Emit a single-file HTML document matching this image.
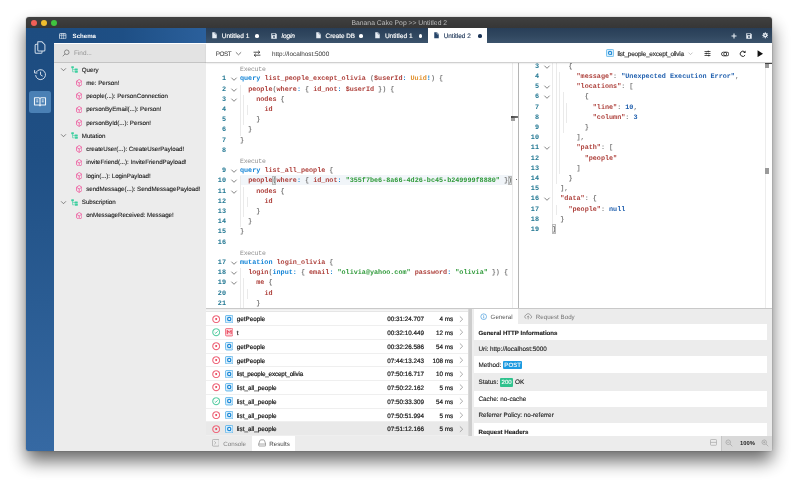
<!DOCTYPE html>
<html><head><meta charset="utf-8"><title>Banana Cake Pop</title>
<style>
html,body{margin:0;padding:0;background:#fff;}
body{width:800px;height:487px;position:relative;overflow:hidden;font-family:"Liberation Sans",sans-serif;font-size:6.4px;color:#222;text-rendering:geometricPrecision;}
#root{position:absolute;left:0;top:0;width:800px;height:487px;will-change:transform;opacity:.999}
#win{position:absolute;left:26.3px;top:17px;width:746px;height:433.7px;border-radius:3px 3px 2px 2px;box-shadow:0 10px 18px rgba(0,0,0,.60),0 0 1.2px rgba(0,0,0,.5);background:#fff;}
.abs,.ln,.cl,.fd,.lens,.g,.tr,.hr,.dr{position:absolute;}
#title{left:26.3px;top:17px;width:746px;height:11.3px;overflow:hidden;background:linear-gradient(#404040,#363636);border-radius:3px 3px 0 0;color:#bdbdbd;text-align:center;line-height:13.6px;font-size:6.8px;}
.tl{position:absolute;width:6.3px;height:6.3px;border-radius:50%;top:19.8px;}
#side{left:26.3px;top:28.2px;width:27.7px;height:422.5px;background:linear-gradient(#1d4c80 0%,#1f4f84 30%,#2a5c93 65%,#3669a3 100%);border-radius:0 0 0 2px;}
#schh{left:54px;top:28.2px;width:151.5px;height:15.3px;background:linear-gradient(to right,#1d4c80 0%,#1e4f85 45%,#2b609c 100%);color:#fff;font-weight:bold;font-size:6.1px;line-height:17.8px;}
#tabs{left:205.5px;top:28.2px;width:566.8px;height:15.3px;background:linear-gradient(#283e58,#30475f 50%,#3b536c);color:#fff;font-size:6.5px;line-height:17.6px;}
#tabs span{position:absolute;top:0.3px;white-space:nowrap;-webkit-text-stroke:0.15px #fff;}
.dot{position:absolute;top:5.9px;width:3.7px;height:3.7px;margin-left:-0.2px;border-radius:50%;}
#schp{left:54px;top:43.5px;width:151.5px;height:407.2px;background:#ececec;}
#find{left:54px;top:43.5px;width:151.5px;height:18px;background:#e3e3e3;border-bottom:0.6px solid #c4c4c4;}
#tool{left:205.5px;top:43.5px;width:566.8px;height:18px;background:#fff;border-bottom:0.6px solid #d0d0d0;box-shadow:0 0.8px 1.6px rgba(0,0,0,.13);z-index:3;line-height:21.2px;font-size:6.4px;color:#333;}
#tool span{position:absolute;top:0;white-space:nowrap;}
.ln{height:10.2px;line-height:10.2px;text-align:right;font-family:"Liberation Mono",monospace;font-size:6.8px;color:#237893;font-weight:bold;}
.cl{height:10.2px;line-height:10.2px;white-space:pre;font-family:"Liberation Mono",monospace;font-size:6.773px;font-weight:bold;color:#777;}
.fd{width:8px;height:10.2px;}
.fold{position:absolute;left:0;top:1.1px;width:8px;height:8px;}
.lens{height:10.2px;line-height:12.4px;font-family:"Liberation Mono",monospace;font-size:6.5px;letter-spacing:-0.25px;color:#8e8e8e;white-space:pre;}
.g{width:0.6px;}
.j{color:#1f5fae}.k{color:#1183d6}.n{color:#ad3f3a}.p{color:#808080}.s{color:#2f9a3a}.v{color:#ad3f3a}.a{color:#1183d6}.t{color:#e0902c}
.tr{left:0;width:205px;height:13.25px;line-height:14.9px;font-size:6.2px;letter-spacing:-0.02px;color:#222;-webkit-text-stroke:0.12px #222;}
.tr span{position:absolute;top:0;white-space:nowrap;}
.ti{width:7px;height:13.2px;}
.ic{position:absolute;left:0;top:3.1px;width:7px;height:7px;}
.hr{left:205.5px;width:262px;height:13.75px;line-height:16.4px;border-bottom:0.5px solid #efefef;box-sizing:border-box;font-size:6.3px;color:#111;background:#fff;-webkit-text-stroke:0.18px #111;}
.hr.sel{background:#e9e9e9;}
.hr span{position:absolute;top:0;white-space:nowrap;}
.hc{width:8.4px;height:13.75px;}
.hi{position:absolute;left:0;top:2.4px;width:8.4px;height:8.4px;}
.hn{left:31.2px;}
.htm{right:43.5px;}
.hms{right:14.3px;}
.dr{left:473.7px;width:293.6px;overflow:hidden;font-size:6.34px;color:#1a1a1a;-webkit-text-stroke:0.12px #1a1a1a;white-space:nowrap;text-indent:4.8px;box-sizing:border-box;}
.bp,.bs{-webkit-text-stroke:0.1px #fff;}
.dr b{font-size:6.12px;}
.bp{display:inline-block;vertical-align:middle;height:8.4px;line-height:10.3px;background:#1e9be0;overflow:hidden;color:#fff;padding:0 1.25px;border-radius:1px;font-size:6.1px;text-indent:0;position:relative;top:-0.1px}
.bs{display:inline-block;vertical-align:middle;height:8.6px;line-height:9.1px;background:#2fc28d;color:#fff;padding:0 1.55px;border-radius:1px;font-size:6.1px;text-indent:0;position:relative;top:-0.2px}
</style></head><body>
<div id="root"><div id="win"></div>
<div class="abs" id="title">Banana Cake Pop &gt;&gt; Untitled 2</div>
<div class="tl" style="left:30.5px;background:#f25f57"></div>
<div class="tl" style="left:40.7px;background:#f1be2e"></div>
<div class="tl" style="left:51px;background:#3fc43f"></div>

<div class="abs" id="side">
  <div class="abs" style="left:3px;top:62.70px;width:22px;height:22.4px;border-radius:2.5px;background:#4a80b5"></div>
  <svg class="abs" style="left:7.2px;top:12.30px" width="13.8" height="14.8" viewBox="0 0 26 28"><path d="M9 3.5 H17 L22.5 9 V19 A2 2 0 0 1 20.5 21 H11 A2 2 0 0 1 9 19 Z" fill="none" stroke="#d3deea" stroke-width="1.9" stroke-linejoin="round"/><path d="M9 8 H6 A2 2 0 0 0 4 10 V23 A2 2 0 0 0 6 25 H15 A2 2 0 0 0 17 23 V21" fill="none" stroke="#d3deea" stroke-width="1.9"/></svg>
  <svg class="abs" style="left:7.1px;top:39.10px" width="14.6" height="14.6" viewBox="0 0 28 28"><path d="M6.2 10 A9.5 9.5 0 1 1 5 15.5" fill="none" stroke="#d3deea" stroke-width="1.9"/><path d="M3 6 V11.5 H8.5" fill="none" stroke="#d3deea" stroke-width="1.9"/><path d="M14.5 9 V15 L18.5 17.5" fill="none" stroke="#d3deea" stroke-width="1.9"/></svg>
  <svg class="abs" style="left:7.1px;top:67.90px" width="14" height="11.6" viewBox="0 0 28 26" preserveAspectRatio="none"><path d="M3 4 H11.5 A2.5 2.5 0 0 1 14 6.5 A2.5 2.5 0 0 1 16.500 4 H25 V20 H16.500 A2.5 2.5 0 0 0 14 22.5 A2.5 2.5 0 0 0 11.5 20 H3 Z M14 6.500 V22" fill="none" stroke="#eef4fa" stroke-width="2.2" stroke-linejoin="round"/><path d="M6.500 9 H10.500 M6.500 13 H10.500 M17.500 9 H21.500 M17.500 13 H21.500" stroke="#eef4fa" stroke-width="2"/></svg>
</div>

<div class="abs" id="schh"><svg class="abs" style="left:5.4px;top:4.9px" width="7.4" height="6.4" viewBox="0 0 15 13"><rect x="1" y="1" width="13" height="11" rx="1.5" fill="none" stroke="#e6edf5" stroke-width="1.5"/><path d="M5.5 1 V12 M9.500 1 V12 M1 4.500 H14" stroke="#e6edf5" stroke-width="1.300"/></svg><span style="position:absolute;left:18.6px">Schema</span></div>
<div class="abs" id="tabs">
  <div class="abs" style="left:222.8px;top:0;width:58.6px;height:15.3px;background:#fff"></div>
  <svg class="abs" style="left:6.6px;top:4.1px" width="5" height="6.6" viewBox="0 0 10 13"><path d="M0.500 0.500 H6 L9.500 4 V12.500 H0.500 Z" fill="#e6ecf3"/><path d="M6 0.500 V4 H9.500" fill="none" stroke="#30475f" stroke-width="1"/></svg>
  <span style="left:16.2px;font-size:6.55px">Untitled 1</span><i class="dot" style="left:49.9px;background:#fff"></i>
  <svg class="abs" style="left:65.6px;top:4.5px" width="6" height="6" viewBox="0 0 12 12"><path d="M0.500 0.500 H9.500 L11.5 2.500 V11.5 H0.500 Z" fill="#e6ecf3"/><rect x="2.500" y="1.500" width="6" height="3" fill="#30475f"/><circle cx="6" cy="8" r="1.800" fill="#30475f"/></svg>
  <span style="left:76.1px;font-style:italic;font-size:6.6px;letter-spacing:-0.15px">login</span>
  <svg class="abs" style="left:110.6px;top:4.1px" width="5" height="6.6" viewBox="0 0 10 13"><path d="M0.500 0.500 H6 L9.500 4 V12.500 H0.500 Z" fill="#e6ecf3"/><path d="M6 0.500 V4 H9.500" fill="none" stroke="#30475f" stroke-width="1"/></svg>
  <span style="left:120.1px;font-size:6.3px">Create DB</span><i class="dot" style="left:154.1px;background:#fff"></i>
  <svg class="abs" style="left:169.6px;top:4.1px" width="5" height="6.6" viewBox="0 0 10 13"><path d="M0.500 0.500 H6 L9.500 4 V12.500 H0.500 Z" fill="#e6ecf3"/><path d="M6 0.500 V4 H9.500" fill="none" stroke="#30475f" stroke-width="1"/></svg>
  <span style="left:179.4px;font-size:6.55px">Untitled 1</span><i class="dot" style="left:213.3px;background:#fff"></i>
  <svg class="abs" style="left:228.4px;top:4.1px" width="5" height="6.6" viewBox="0 0 10 13"><path d="M0.500 0.500 H6 L9.500 4 V12.500 H0.500 Z" fill="#27466a"/><path d="M6 0.500 V4 H9.500" fill="none" stroke="#fff" stroke-width="1"/></svg>
  <span style="left:238.2px;color:#1d3557;font-size:6.4px;-webkit-text-stroke:0.15px #1d3557">Untitled 2</span><i class="dot" style="left:272.5px;background:#1d3557"></i>
  <svg class="abs" style="left:525.300px;top:4.6px" width="6" height="6" viewBox="0 0 12 12"><path d="M6 1 V11 M1 6 H11" stroke="#e8eef5" stroke-width="2.2"/></svg>
  <svg class="abs" style="left:540.9px;top:4.6px" width="6" height="6" viewBox="0 0 12 12"><path d="M0.500 0.500 H9.500 L11.5 2.500 V11.5 H0.500 Z" fill="#e8eef5"/><rect x="2.500" y="1.500" width="6" height="3" fill="#30475f"/><circle cx="6" cy="8" r="1.800" fill="#30475f"/></svg>
  <svg class="abs" style="left:556px;top:4.300px" width="6.600" height="6.600" viewBox="0 0 14 14"><circle cx="7" cy="7" r="3.400" fill="none" stroke="#e8eef5" stroke-width="2.600"/><path d="M7 0.500 V13.500 M0.500 7 H13.500 M2.400 2.400 L11.6 11.6 M11.6 2.400 L2.400 11.6" stroke="#e8eef5" stroke-width="2"/><circle cx="7" cy="7" r="1.700" fill="#30475f"/></svg>
</div>

<div class="abs" id="schp"></div>
<div class="abs" id="find"><svg class="abs" style="left:7.6px;top:5.4px" width="8" height="8" viewBox="0 0 16 16"><circle cx="9.500" cy="6.500" r="4.600" fill="none" stroke="#666" stroke-width="1.400"/><path d="M6.200 9.800 L1.500 14.500" stroke="#666" stroke-width="1.400"/></svg><span style="position:absolute;left:20px;top:0;line-height:20.4px;color:#949494;font-size:6.4px">Find...</span></div>
<div class="tr" style="top:63.12px;line-height:15.1px"><span class="ti" style="left:60px"><svg class="ic" viewBox="0 0 16 16"><path d="M2.500 5.300 L8 10.800 L13.500 5.300" fill="none" stroke="#555" stroke-width="1.600"/></svg></span><span class="ti" style="left:71.2px"><svg class="ic" viewBox="0 0 14 14"><path d="M3 4 V11.600 H8.500 M3 7.200 H7.500" fill="none" stroke="#3ccf9f" stroke-width="1.2"/><rect x="0.500" y="0.500" width="5.200" height="4.200" rx="1" fill="#3ccf9f"/><rect x="7" y="5" width="6.500" height="4.200" rx="1" fill="#3ccf9f"/><rect x="8" y="9.700" width="5.500" height="3.900" rx="1" fill="#3ccf9f"/></svg></span><span class="tt" style="left:81.8px">Query</span></div>
<div class="tr" style="top:76.38px;line-height:15.1px"><span class="ti" style="left:75.9px"><svg class="ic" style="width:6.4px;height:7.9px;top:2.65px" viewBox="0 0 12 14" preserveAspectRatio="none"><path d="M6 0.800 L11 3.900 V10.100 L6 13.200 L1 10.100 V3.900 Z M1.300 4.100 L6 7 L10.700 4.100 M6 7 V13" fill="none" stroke="#ef5a9f" stroke-width="1.500" stroke-linejoin="round"/></svg></span><span class="tt" style="left:86.2px">me: Person!</span></div>
<div class="tr" style="top:89.62px"><span class="ti" style="left:75.9px"><svg class="ic" style="width:6.4px;height:7.9px;top:2.65px" viewBox="0 0 12 14" preserveAspectRatio="none"><path d="M6 0.800 L11 3.900 V10.100 L6 13.200 L1 10.100 V3.900 Z M1.300 4.100 L6 7 L10.700 4.100 M6 7 V13" fill="none" stroke="#ef5a9f" stroke-width="1.500" stroke-linejoin="round"/></svg></span><span class="tt" style="left:86.2px">people(...): PersonConnection</span></div>
<div class="tr" style="top:102.88px"><span class="ti" style="left:75.9px"><svg class="ic" style="width:6.4px;height:7.9px;top:2.65px" viewBox="0 0 12 14" preserveAspectRatio="none"><path d="M6 0.800 L11 3.900 V10.100 L6 13.200 L1 10.100 V3.900 Z M1.300 4.100 L6 7 L10.700 4.100 M6 7 V13" fill="none" stroke="#ef5a9f" stroke-width="1.500" stroke-linejoin="round"/></svg></span><span class="tt" style="left:86.2px">personByEmail(...): Person!</span></div>
<div class="tr" style="top:116.12px;line-height:15.1px"><span class="ti" style="left:75.9px"><svg class="ic" style="width:6.4px;height:7.9px;top:2.65px" viewBox="0 0 12 14" preserveAspectRatio="none"><path d="M6 0.800 L11 3.900 V10.100 L6 13.200 L1 10.100 V3.900 Z M1.300 4.100 L6 7 L10.700 4.100 M6 7 V13" fill="none" stroke="#ef5a9f" stroke-width="1.500" stroke-linejoin="round"/></svg></span><span class="tt" style="left:86.2px">personById(...): Person!</span></div>
<div class="tr" style="top:129.38px;line-height:15.1px"><span class="ti" style="left:60px"><svg class="ic" viewBox="0 0 16 16"><path d="M2.500 5.300 L8 10.800 L13.500 5.300" fill="none" stroke="#555" stroke-width="1.600"/></svg></span><span class="ti" style="left:71.2px"><svg class="ic" viewBox="0 0 14 14"><path d="M3 4 V11.600 H8.500 M3 7.200 H7.500" fill="none" stroke="#3ccf9f" stroke-width="1.2"/><rect x="0.500" y="0.500" width="5.200" height="4.200" rx="1" fill="#3ccf9f"/><rect x="7" y="5" width="6.500" height="4.200" rx="1" fill="#3ccf9f"/><rect x="8" y="9.700" width="5.500" height="3.900" rx="1" fill="#3ccf9f"/></svg></span><span class="tt" style="left:81.8px">Mutation</span></div>
<div class="tr" style="top:142.62px"><span class="ti" style="left:75.9px"><svg class="ic" style="width:6.4px;height:7.9px;top:2.65px" viewBox="0 0 12 14" preserveAspectRatio="none"><path d="M6 0.800 L11 3.900 V10.100 L6 13.200 L1 10.100 V3.900 Z M1.300 4.100 L6 7 L10.700 4.100 M6 7 V13" fill="none" stroke="#ef5a9f" stroke-width="1.500" stroke-linejoin="round"/></svg></span><span class="tt" style="left:86.2px">createUser(...): CreateUserPayload!</span></div>
<div class="tr" style="top:155.88px"><span class="ti" style="left:75.9px"><svg class="ic" style="width:6.4px;height:7.9px;top:2.65px" viewBox="0 0 12 14" preserveAspectRatio="none"><path d="M6 0.800 L11 3.900 V10.100 L6 13.200 L1 10.100 V3.900 Z M1.300 4.100 L6 7 L10.700 4.100 M6 7 V13" fill="none" stroke="#ef5a9f" stroke-width="1.500" stroke-linejoin="round"/></svg></span><span class="tt" style="left:86.2px">inviteFriend(...): InviteFriendPayload!</span></div>
<div class="tr" style="top:169.12px;line-height:15.1px"><span class="ti" style="left:75.9px"><svg class="ic" style="width:6.4px;height:7.9px;top:2.65px" viewBox="0 0 12 14" preserveAspectRatio="none"><path d="M6 0.800 L11 3.900 V10.100 L6 13.200 L1 10.100 V3.900 Z M1.300 4.100 L6 7 L10.700 4.100 M6 7 V13" fill="none" stroke="#ef5a9f" stroke-width="1.500" stroke-linejoin="round"/></svg></span><span class="tt" style="left:86.2px">login(...): LoginPayload!</span></div>
<div class="tr" style="top:182.38px;line-height:15.1px"><span class="ti" style="left:75.9px"><svg class="ic" style="width:6.4px;height:7.9px;top:2.65px" viewBox="0 0 12 14" preserveAspectRatio="none"><path d="M6 0.800 L11 3.900 V10.100 L6 13.200 L1 10.100 V3.900 Z M1.300 4.100 L6 7 L10.700 4.100 M6 7 V13" fill="none" stroke="#ef5a9f" stroke-width="1.500" stroke-linejoin="round"/></svg></span><span class="tt" style="left:86.2px">sendMessage(...): SendMessagePayload!</span></div>
<div class="tr" style="top:195.62px"><span class="ti" style="left:60px"><svg class="ic" viewBox="0 0 16 16"><path d="M2.500 5.300 L8 10.800 L13.500 5.300" fill="none" stroke="#555" stroke-width="1.600"/></svg></span><span class="ti" style="left:71.2px"><svg class="ic" viewBox="0 0 14 14"><path d="M3 4 V11.600 H8.500 M3 7.200 H7.500" fill="none" stroke="#3ccf9f" stroke-width="1.2"/><rect x="0.500" y="0.500" width="5.200" height="4.200" rx="1" fill="#3ccf9f"/><rect x="7" y="5" width="6.500" height="4.200" rx="1" fill="#3ccf9f"/><rect x="8" y="9.700" width="5.500" height="3.900" rx="1" fill="#3ccf9f"/></svg></span><span class="tt" style="left:81.8px">Subscription</span></div>
<div class="tr" style="top:208.88px"><span class="ti" style="left:75.9px"><svg class="ic" style="width:6.4px;height:7.9px;top:2.65px" viewBox="0 0 12 14" preserveAspectRatio="none"><path d="M6 0.800 L11 3.900 V10.100 L6 13.200 L1 10.100 V3.900 Z M1.300 4.100 L6 7 L10.700 4.100 M6 7 V13" fill="none" stroke="#ef5a9f" stroke-width="1.500" stroke-linejoin="round"/></svg></span><span class="tt" style="left:86.2px">onMessageReceived: Message!</span></div>

<div class="abs" id="tool">
  <span style="left:10.3px;letter-spacing:-0.5px">POST</span>
  <svg class="abs" style="left:29.800px;top:6.800px" width="7" height="7" viewBox="0 0 16 16"><path d="M2 5.200 L8 11 L14 5.200" fill="none" stroke="#444" stroke-width="1.600"/></svg>
  <svg class="abs" style="left:47.600px;top:6.300px" width="8" height="7.400" viewBox="0 0 16 15"><path d="M1 4.500 H13.500 M10.500 1.500 L13.800 4.500 L10.500 7.500" fill="none" stroke="#222" stroke-width="1.600"/><path d="M15 10.500 H2.500 M5.500 7.500 L2.200 10.500 L5.500 13.500" fill="none" stroke="#222" stroke-width="1.600"/></svg>
  <span style="left:66.5px">http://localhost:5000</span>
  <svg class="abs" style="left:400.500px;top:5.900px" width="8.100" height="8.100" viewBox="0 0 16 16"><rect x="0.800" y="0.800" width="14.400" height="14.400" rx="2.600" fill="#d9eefb" stroke="#4eaee8" stroke-width="1.600"/><circle cx="8" cy="7.800" r="3.100" fill="#fff" stroke="#1f8bd8" stroke-width="2.300"/><path d="M9.800 9.800 L11.600 11.900" stroke="#2387d3" stroke-width="1.600"/></svg>
  <span style="left:411.900px;font-size:6.45px;letter-spacing:-0.2px;color:#2a2a2a;-webkit-text-stroke:0.15px #2a2a2a">list_people_except_olivia</span>
  <svg class="abs" style="left:481.500px;top:6.400px" width="7" height="7" viewBox="0 0 16 16"><path d="M3.500 6 L8 10.500 L12.500 6" fill="none" stroke="#999" stroke-width="1.300"/></svg>
  <svg class="abs" style="left:498.400px;top:6.500px" width="7" height="7" viewBox="0 0 14 14"><path d="M1 3 H13 M1 7 H13 M1 11 H13" stroke="#222" stroke-width="1.500"/><path d="M8.500 1.300 V4.700 M4.500 5.300 V8.700 M9.500 9.300 V12.700" stroke="#222" stroke-width="1.800"/></svg>
  <svg class="abs" style="left:515.500px;top:7.5px" width="8.400" height="6" viewBox="0 0 17 12"><rect x="1" y="2.300" width="10.500" height="7.400" rx="3.700" fill="none" stroke="#222" stroke-width="1.600"/><rect x="5.500" y="2.300" width="10.500" height="7.400" rx="3.700" fill="none" stroke="#222" stroke-width="1.600"/></svg>
  <svg class="abs" style="left:533.800px;top:6.200px" width="7.600" height="7.600" viewBox="0 0 16 16"><path d="M12.800 10.800 A5.500 5.500 0 1 1 12.300 4.500" fill="none" stroke="#222" stroke-width="2"/><path d="M13.800 1.200 V6.200 H8.800 Z" fill="#222"/></svg>
  <svg class="abs" style="left:551.300px;top:6.300px" width="6.400" height="7.400" viewBox="0 0 12 14"><path d="M1 0.500 L11.500 7 L1 13.500 Z" fill="#111"/></svg>
</div>

<!-- editor -->
<div class="abs" style="left:205.5px;top:62.1px;width:312px;height:246px;background:#fff;overflow:hidden"></div>
<div class="abs" style="left:0;top:0;width:518.2px;height:308px;overflow:hidden;pointer-events:none">
<div class="abs" style="left:239.5px;top:175.2px;width:273px;height:10.2px;background:#f1f5f9"></div>
<div class="ln" style="top:74.30px;left:205.5px;width:20.5px">1</div>
<div class="fd" style="top:74.30px;left:230px"><svg class="fold" viewBox="0 0 8 8"><path d="M1.4 2.7 L4 5.3 L6.6 2.7" fill="none" stroke="#5a5a5a" stroke-width="0.75"/></svg></div>
<div class="cl" style="top:74.30px;left:240px"><span class="k">query</span> <span class="n">list_people_except_olivia</span><span class="p"> (</span><span class="v">$userId</span><span class="a">:</span> <span class="t">Uuid</span><span class="a">!</span><span class="p">) {</span></div>
<div class="ln" style="top:84.50px;left:205.5px;width:20.5px">2</div>
<div class="fd" style="top:84.50px;left:230px"><svg class="fold" viewBox="0 0 8 8"><path d="M1.4 2.7 L4 5.3 L6.6 2.7" fill="none" stroke="#5a5a5a" stroke-width="0.75"/></svg></div>
<div class="cl" style="top:84.50px;left:240px">  <span class="n">people</span><span class="p">(</span><span class="n">where</span><span class="a">:</span><span class="p"> { </span><span class="n">id_not</span><span class="a">:</span> <span class="v">$userId</span><span class="p"> }) {</span></div>
<div class="ln" style="top:94.70px;left:205.5px;width:20.5px">3</div>
<div class="fd" style="top:94.70px;left:230px"><svg class="fold" viewBox="0 0 8 8"><path d="M1.4 2.7 L4 5.3 L6.6 2.7" fill="none" stroke="#5a5a5a" stroke-width="0.75"/></svg></div>
<div class="cl" style="top:94.70px;left:240px">    <span class="n">nodes</span><span class="p"> {</span></div>
<div class="ln" style="top:104.90px;left:205.5px;width:20.5px">4</div>
<div class="cl" style="top:104.90px;left:240px">      <span class="n">id</span></div>
<div class="ln" style="top:115.10px;left:205.5px;width:20.5px">5</div>
<div class="cl" style="top:115.10px;left:240px"><span class="p">    }</span></div>
<div class="ln" style="top:125.30px;left:205.5px;width:20.5px">6</div>
<div class="cl" style="top:125.30px;left:240px"><span class="p">  }</span></div>
<div class="ln" style="top:135.50px;left:205.5px;width:20.5px">7</div>
<div class="cl" style="top:135.50px;left:240px"><span class="p">}</span></div>
<div class="ln" style="top:145.70px;left:205.5px;width:20.5px">8</div>
<div class="ln" style="top:166.10px;left:205.5px;width:20.5px">9</div>
<div class="fd" style="top:166.10px;left:230px"><svg class="fold" viewBox="0 0 8 8"><path d="M1.4 2.7 L4 5.3 L6.6 2.7" fill="none" stroke="#5a5a5a" stroke-width="0.75"/></svg></div>
<div class="cl" style="top:166.10px;left:240px"><span class="k">query</span> <span class="n">list_all_people</span><span class="p"> {</span></div>
<div class="ln" style="top:176.30px;left:205.5px;width:20.5px">10</div>
<div class="fd" style="top:176.30px;left:230px"><svg class="fold" viewBox="0 0 8 8"><path d="M1.4 2.7 L4 5.3 L6.6 2.7" fill="none" stroke="#5a5a5a" stroke-width="0.75"/></svg></div>
<div class="cl" style="top:176.30px;left:240px">  <span class="n">people</span><span class="p">(</span><span class="n">where</span><span class="a">:</span><span class="p"> { </span><span class="n">id_not</span><span class="a">:</span> <span class="s">"355f7be6-8a66-4d26-bc45-b249999f8880"</span><span class="p"> })</span></div>
<div class="ln" style="top:186.50px;left:205.5px;width:20.5px">11</div>
<div class="fd" style="top:186.50px;left:230px"><svg class="fold" viewBox="0 0 8 8"><path d="M1.4 2.7 L4 5.3 L6.6 2.7" fill="none" stroke="#5a5a5a" stroke-width="0.75"/></svg></div>
<div class="cl" style="top:186.50px;left:240px">    <span class="n">nodes</span><span class="p"> {</span></div>
<div class="ln" style="top:196.70px;left:205.5px;width:20.5px">12</div>
<div class="cl" style="top:196.70px;left:240px">      <span class="n">id</span></div>
<div class="ln" style="top:206.90px;left:205.5px;width:20.5px">13</div>
<div class="cl" style="top:206.90px;left:240px"><span class="p">    }</span></div>
<div class="ln" style="top:217.10px;left:205.5px;width:20.5px">14</div>
<div class="cl" style="top:217.10px;left:240px"><span class="p">  }</span></div>
<div class="ln" style="top:227.30px;left:205.5px;width:20.5px">15</div>
<div class="cl" style="top:227.30px;left:240px"><span class="p">}</span></div>
<div class="ln" style="top:237.50px;left:205.5px;width:20.5px">16</div>
<div class="ln" style="top:257.90px;left:205.5px;width:20.5px">17</div>
<div class="fd" style="top:257.90px;left:230px"><svg class="fold" viewBox="0 0 8 8"><path d="M1.4 2.7 L4 5.3 L6.6 2.7" fill="none" stroke="#5a5a5a" stroke-width="0.75"/></svg></div>
<div class="cl" style="top:257.90px;left:240px"><span class="k">mutation</span> <span class="n">login_olivia</span><span class="p"> {</span></div>
<div class="ln" style="top:268.10px;left:205.5px;width:20.5px">18</div>
<div class="fd" style="top:268.10px;left:230px"><svg class="fold" viewBox="0 0 8 8"><path d="M1.4 2.7 L4 5.3 L6.6 2.7" fill="none" stroke="#5a5a5a" stroke-width="0.75"/></svg></div>
<div class="cl" style="top:268.10px;left:240px">  <span class="n">login</span><span class="p">(</span><span class="k">input</span><span class="a">:</span><span class="p"> { </span><span class="n">email</span><span class="a">:</span> <span class="s">"olivia@yahoo.com"</span> <span class="n">password</span><span class="a">:</span> <span class="s">"olivia"</span><span class="p"> }) {</span></div>
<div class="ln" style="top:278.30px;left:205.5px;width:20.5px">19</div>
<div class="fd" style="top:278.30px;left:230px"><svg class="fold" viewBox="0 0 8 8"><path d="M1.4 2.7 L4 5.3 L6.6 2.7" fill="none" stroke="#5a5a5a" stroke-width="0.75"/></svg></div>
<div class="cl" style="top:278.30px;left:240px">    <span class="n">me</span><span class="p"> {</span></div>
<div class="ln" style="top:288.50px;left:205.5px;width:20.5px">20</div>
<div class="cl" style="top:288.50px;left:240px">      <span class="n">id</span></div>
<div class="ln" style="top:298.70px;left:205.5px;width:20.5px">21</div>
<div class="cl" style="top:298.70px;left:240px"><span class="p">    }</span></div>
<div class="lens" style="top:63.90px;left:240px">Execute</div>
<div class="lens" style="top:155.70px;left:240px">Execute</div>
<div class="lens" style="top:247.50px;left:240px">Execute</div>
<div class="g" style="left:239.50px;top:84.50px;height:51.00px;background:#eaeaea"></div>
<div class="g" style="left:243.05px;top:94.70px;height:30.60px;background:#eaeaea"></div>
<div class="g" style="left:246.60px;top:104.90px;height:10.20px;background:#eaeaea"></div>
<div class="g" style="left:239.50px;top:176.30px;height:51.00px;background:#eaeaea"></div>
<div class="g" style="left:243.05px;top:186.50px;height:30.60px;background:#eaeaea"></div>
<div class="g" style="left:246.60px;top:196.70px;height:10.20px;background:#eaeaea"></div>
<div class="g" style="left:239.50px;top:268.10px;height:39.90px;background:#eaeaea"></div>
<div class="g" style="left:243.05px;top:278.30px;height:29.70px;background:#eaeaea"></div>
<div class="g" style="left:246.60px;top:288.50px;height:10.20px;background:#eaeaea"></div>
<div class="abs" style="left:272.2px;top:175.600px;width:4.200px;height:9.400px;border:0.500px solid #b9b9b9;box-sizing:border-box;background:rgba(0,60,0,.05)"></div>
<div class="abs" style="left:508.100px;top:175.600px;width:4.200px;height:9.400px;border:0.500px solid #b9b9b9;box-sizing:border-box;background:rgba(0,60,0,.05)"></div>
<div class="abs" style="left:512.4px;top:62px;width:0.5px;height:246px;background:#ececec"></div>
<div class="abs" style="left:515.6px;top:179.2px;width:1.6px;height:1.2px;background:#666"></div>
<div class="abs" style="left:511.3px;top:116.4px;width:6.8px;height:1.4px;background:linear-gradient(to right,#444,#777)"></div>
<div class="abs" style="left:511.3px;top:117.8px;width:3.4px;height:3px;background:#a0a0a0"></div>
</div>
<div class="abs" style="left:518px;top:62px;width:0.700px;height:246px;background:#b5b5b5;z-index:2"></div>
<!-- response -->
<div class="abs" style="left:518.6px;top:62px;width:253.700px;height:246px;overflow:hidden">
<div style="position:absolute;left:-518.6px;top:-62px;width:800px;height:487px">
<div class="ln" style="top:61.80px;left:519px;width:20px">3</div>
<div class="fd" style="top:61.80px;left:542.6px"><svg class="fold" viewBox="0 0 8 8"><path d="M1.4 2.7 L4 5.3 L6.6 2.7" fill="none" stroke="#5a5a5a" stroke-width="0.75"/></svg></div>
<div class="cl" style="top:61.80px;left:552.2px"><span class="p">    {</span></div>
<div class="ln" style="top:72.00px;left:519px;width:20px">4</div>
<div class="cl" style="top:72.00px;left:552.2px">      <span class="n">"message"</span><span class="p">: </span><span class="j">"Unexpected Execution Error"</span><span class="p">,</span></div>
<div class="ln" style="top:82.20px;left:519px;width:20px">5</div>
<div class="fd" style="top:82.20px;left:542.6px"><svg class="fold" viewBox="0 0 8 8"><path d="M1.4 2.7 L4 5.3 L6.6 2.7" fill="none" stroke="#5a5a5a" stroke-width="0.75"/></svg></div>
<div class="cl" style="top:82.20px;left:552.2px">      <span class="n">"locations"</span><span class="p">: [</span></div>
<div class="ln" style="top:92.40px;left:519px;width:20px">6</div>
<div class="fd" style="top:92.40px;left:542.6px"><svg class="fold" viewBox="0 0 8 8"><path d="M1.4 2.7 L4 5.3 L6.6 2.7" fill="none" stroke="#5a5a5a" stroke-width="0.75"/></svg></div>
<div class="cl" style="top:92.40px;left:552.2px"><span class="p">        {</span></div>
<div class="ln" style="top:102.60px;left:519px;width:20px">7</div>
<div class="cl" style="top:102.60px;left:552.2px">          <span class="n">"line"</span><span class="p">: </span><span class="j">10</span><span class="p">,</span></div>
<div class="ln" style="top:112.80px;left:519px;width:20px">8</div>
<div class="cl" style="top:112.80px;left:552.2px">          <span class="n">"column"</span><span class="p">: </span><span class="j">3</span></div>
<div class="ln" style="top:123.00px;left:519px;width:20px">9</div>
<div class="cl" style="top:123.00px;left:552.2px"><span class="p">        }</span></div>
<div class="ln" style="top:133.20px;left:519px;width:20px">10</div>
<div class="cl" style="top:133.20px;left:552.2px"><span class="p">      ],</span></div>
<div class="ln" style="top:143.40px;left:519px;width:20px">11</div>
<div class="fd" style="top:143.40px;left:542.6px"><svg class="fold" viewBox="0 0 8 8"><path d="M1.4 2.7 L4 5.3 L6.6 2.7" fill="none" stroke="#5a5a5a" stroke-width="0.75"/></svg></div>
<div class="cl" style="top:143.40px;left:552.2px">      <span class="n">"path"</span><span class="p">: [</span></div>
<div class="ln" style="top:153.60px;left:519px;width:20px">12</div>
<div class="cl" style="top:153.60px;left:552.2px">        <span class="n">"people"</span></div>
<div class="ln" style="top:163.80px;left:519px;width:20px">13</div>
<div class="cl" style="top:163.80px;left:552.2px"><span class="p">      ]</span></div>
<div class="ln" style="top:174.00px;left:519px;width:20px">14</div>
<div class="cl" style="top:174.00px;left:552.2px"><span class="p">    }</span></div>
<div class="ln" style="top:184.20px;left:519px;width:20px">15</div>
<div class="cl" style="top:184.20px;left:552.2px"><span class="p">  ],</span></div>
<div class="ln" style="top:194.40px;left:519px;width:20px">16</div>
<div class="fd" style="top:194.40px;left:542.6px"><svg class="fold" viewBox="0 0 8 8"><path d="M1.4 2.7 L4 5.3 L6.6 2.7" fill="none" stroke="#5a5a5a" stroke-width="0.75"/></svg></div>
<div class="cl" style="top:194.40px;left:552.2px">  <span class="n">"data"</span><span class="p">: {</span></div>
<div class="ln" style="top:204.60px;left:519px;width:20px">17</div>
<div class="cl" style="top:204.60px;left:552.2px">    <span class="n">"people"</span><span class="p">: </span><span class="j">null</span></div>
<div class="ln" style="top:214.80px;left:519px;width:20px">18</div>
<div class="cl" style="top:214.80px;left:552.2px"><span class="p">  }</span></div>
<div class="ln" style="top:225.00px;left:519px;width:20px">19</div>
<div class="cl" style="top:225.00px;left:552.2px"><span class="p">}</span></div>
<div class="g" style="left:552.20px;top:62.00px;height:163.00px;background:#eaeaea"></div>
<div class="g" style="left:555.70px;top:62.00px;height:122.20px;background:#eaeaea"></div>
<div class="g" style="left:559.20px;top:72.00px;height:102.00px;background:#eaeaea"></div>
<div class="g" style="left:562.70px;top:92.40px;height:40.80px;background:#eaeaea"></div>
<div class="g" style="left:566.20px;top:102.60px;height:20.40px;background:#eaeaea"></div>
<div class="g" style="left:555.70px;top:204.60px;height:10.20px;background:#eaeaea"></div>
<div class="abs" style="left:552.2px;top:224.2px;width:4.200px;height:9.400px;border:0.500px solid #bbb;box-sizing:border-box;background:rgba(0,0,0,.04)"></div>
<div class="abs" style="left:764.6px;top:62px;width:0.500px;height:246px;background:#ededed"></div>
<div class="abs" style="left:765.3px;top:62.7px;width:7px;height:1.4px;background:#484848"></div>
<div class="abs" style="left:765.3px;top:64.1px;width:3.6px;height:3.9px;background:#999"></div>
<div class="abs" style="left:765.2px;top:168px;width:3.7px;height:5.8px;background:#9a9a9a"></div>
</div></div>

<!-- bottom panel -->
<div class="abs" style="left:205.5px;top:308px;width:566.8px;height:0.700px;background:#c9c9c9"></div>
<div class="abs" style="left:205.5px;top:308.600px;width:262px;height:127px;background:#fff"></div>
<div class="abs" style="left:205.5px;top:308.600px;width:262px;height:2.4px;background:linear-gradient(#ececec,#f8f8f8);border-bottom:0.5px solid #e6e6e6;z-index:4"></div>
<div class="hr" style="top:312.30px"><span class="hc" style="left:6.6px"><svg class="hi" viewBox="0 0 16 16"><circle cx="8" cy="8" r="6.600" fill="none" stroke="#ef6a7e" stroke-width="2.100"/><path d="M6.500 6.500 L9.500 9.500 M9.500 6.500 L6.500 9.500" stroke="#ea4459" stroke-width="2"/></svg></span><span class="hc" style="left:19.2px"><svg class="hi" viewBox="0 0 16 16"><rect x="0.800" y="0.800" width="14.400" height="14.400" rx="2.600" fill="#d9eefb" stroke="#4eaee8" stroke-width="1.600"/><circle cx="8" cy="7.800" r="3.100" fill="#fff" stroke="#1f8bd8" stroke-width="2.300"/><path d="M9.800 9.800 L11.600 11.900" stroke="#2387d3" stroke-width="1.600"/></svg></span><span class="hn">getPeople</span><span class="htm">00:31:24.707</span><span class="hms">4 ms</span><span class="hc" style="left:251px"><svg class="hi" viewBox="0 0 16 16"><path d="M5.500 2.800 L10.800 8 L5.500 13.200" fill="none" stroke="#808080" stroke-width="1.250"/></svg></span></div>
<div class="hr" style="top:326.05px"><span class="hc" style="left:6.6px"><svg class="hi" viewBox="0 0 16 16"><circle cx="8" cy="8" r="6.600" fill="none" stroke="#62d0a8" stroke-width="2.100"/><path d="M5.200 8.300 L7.200 10.200 L10.800 6.200" fill="none" stroke="#4cc79a" stroke-width="1.700"/></svg></span><span class="hc" style="left:19.2px"><svg class="hi" viewBox="0 0 16 16"><rect x="0.800" y="0.800" width="14.400" height="14.400" rx="2.600" fill="#fbd5db" stroke="#ee5a6e" stroke-width="1.600"/><path d="M4.300 11.600 V4.600 L8 8.600 L11.700 4.600 V11.600" fill="none" stroke="#e5364c" stroke-width="1.900"/></svg></span><span class="hn">t</span><span class="htm">00:32:10.449</span><span class="hms">12 ms</span><span class="hc" style="left:251px"><svg class="hi" viewBox="0 0 16 16"><path d="M5.500 2.800 L10.800 8 L5.500 13.200" fill="none" stroke="#808080" stroke-width="1.250"/></svg></span></div>
<div class="hr" style="top:339.80px"><span class="hc" style="left:6.6px"><svg class="hi" viewBox="0 0 16 16"><circle cx="8" cy="8" r="6.600" fill="none" stroke="#ef6a7e" stroke-width="2.100"/><path d="M6.500 6.500 L9.500 9.500 M9.500 6.500 L6.500 9.500" stroke="#ea4459" stroke-width="2"/></svg></span><span class="hc" style="left:19.2px"><svg class="hi" viewBox="0 0 16 16"><rect x="0.800" y="0.800" width="14.400" height="14.400" rx="2.600" fill="#d9eefb" stroke="#4eaee8" stroke-width="1.600"/><circle cx="8" cy="7.800" r="3.100" fill="#fff" stroke="#1f8bd8" stroke-width="2.300"/><path d="M9.800 9.800 L11.600 11.900" stroke="#2387d3" stroke-width="1.600"/></svg></span><span class="hn">getPeople</span><span class="htm">00:32:26.586</span><span class="hms">54 ms</span><span class="hc" style="left:251px"><svg class="hi" viewBox="0 0 16 16"><path d="M5.500 2.800 L10.800 8 L5.500 13.200" fill="none" stroke="#808080" stroke-width="1.250"/></svg></span></div>
<div class="hr" style="top:353.55px"><span class="hc" style="left:6.6px"><svg class="hi" viewBox="0 0 16 16"><circle cx="8" cy="8" r="6.600" fill="none" stroke="#ef6a7e" stroke-width="2.100"/><path d="M6.500 6.500 L9.500 9.500 M9.500 6.500 L6.500 9.500" stroke="#ea4459" stroke-width="2"/></svg></span><span class="hc" style="left:19.2px"><svg class="hi" viewBox="0 0 16 16"><rect x="0.800" y="0.800" width="14.400" height="14.400" rx="2.600" fill="#d9eefb" stroke="#4eaee8" stroke-width="1.600"/><circle cx="8" cy="7.800" r="3.100" fill="#fff" stroke="#1f8bd8" stroke-width="2.300"/><path d="M9.800 9.800 L11.600 11.900" stroke="#2387d3" stroke-width="1.600"/></svg></span><span class="hn">getPeople</span><span class="htm">07:44:13.243</span><span class="hms">108 ms</span><span class="hc" style="left:251px"><svg class="hi" viewBox="0 0 16 16"><path d="M5.500 2.800 L10.800 8 L5.500 13.200" fill="none" stroke="#808080" stroke-width="1.250"/></svg></span></div>
<div class="hr" style="top:367.30px"><span class="hc" style="left:6.6px"><svg class="hi" viewBox="0 0 16 16"><circle cx="8" cy="8" r="6.600" fill="none" stroke="#ef6a7e" stroke-width="2.100"/><path d="M6.500 6.500 L9.500 9.500 M9.500 6.500 L6.500 9.500" stroke="#ea4459" stroke-width="2"/></svg></span><span class="hc" style="left:19.2px"><svg class="hi" viewBox="0 0 16 16"><rect x="0.800" y="0.800" width="14.400" height="14.400" rx="2.600" fill="#d9eefb" stroke="#4eaee8" stroke-width="1.600"/><circle cx="8" cy="7.800" r="3.100" fill="#fff" stroke="#1f8bd8" stroke-width="2.300"/><path d="M9.800 9.800 L11.600 11.900" stroke="#2387d3" stroke-width="1.600"/></svg></span><span class="hn" style="letter-spacing:-0.14px">list_people_except_olivia</span><span class="htm">07:50:16.717</span><span class="hms">10 ms</span><span class="hc" style="left:251px"><svg class="hi" viewBox="0 0 16 16"><path d="M5.500 2.800 L10.800 8 L5.500 13.200" fill="none" stroke="#808080" stroke-width="1.250"/></svg></span></div>
<div class="hr" style="top:381.05px"><span class="hc" style="left:6.6px"><svg class="hi" viewBox="0 0 16 16"><circle cx="8" cy="8" r="6.600" fill="none" stroke="#ef6a7e" stroke-width="2.100"/><path d="M6.500 6.500 L9.500 9.500 M9.500 6.500 L6.500 9.500" stroke="#ea4459" stroke-width="2"/></svg></span><span class="hc" style="left:19.2px"><svg class="hi" viewBox="0 0 16 16"><rect x="0.800" y="0.800" width="14.400" height="14.400" rx="2.600" fill="#d9eefb" stroke="#4eaee8" stroke-width="1.600"/><circle cx="8" cy="7.800" r="3.100" fill="#fff" stroke="#1f8bd8" stroke-width="2.300"/><path d="M9.800 9.800 L11.600 11.900" stroke="#2387d3" stroke-width="1.600"/></svg></span><span class="hn">list_all_people</span><span class="htm">07:50:22.162</span><span class="hms">5 ms</span><span class="hc" style="left:251px"><svg class="hi" viewBox="0 0 16 16"><path d="M5.500 2.800 L10.800 8 L5.500 13.200" fill="none" stroke="#808080" stroke-width="1.250"/></svg></span></div>
<div class="hr" style="top:394.80px"><span class="hc" style="left:6.6px"><svg class="hi" viewBox="0 0 16 16"><circle cx="8" cy="8" r="6.600" fill="none" stroke="#62d0a8" stroke-width="2.100"/><path d="M5.200 8.300 L7.200 10.200 L10.800 6.200" fill="none" stroke="#4cc79a" stroke-width="1.700"/></svg></span><span class="hc" style="left:19.2px"><svg class="hi" viewBox="0 0 16 16"><rect x="0.800" y="0.800" width="14.400" height="14.400" rx="2.600" fill="#d9eefb" stroke="#4eaee8" stroke-width="1.600"/><circle cx="8" cy="7.800" r="3.100" fill="#fff" stroke="#1f8bd8" stroke-width="2.300"/><path d="M9.800 9.800 L11.600 11.900" stroke="#2387d3" stroke-width="1.600"/></svg></span><span class="hn">list_all_people</span><span class="htm">07:50:33.309</span><span class="hms">54 ms</span><span class="hc" style="left:251px"><svg class="hi" viewBox="0 0 16 16"><path d="M5.500 2.800 L10.800 8 L5.500 13.200" fill="none" stroke="#808080" stroke-width="1.250"/></svg></span></div>
<div class="hr" style="top:408.55px"><span class="hc" style="left:6.6px"><svg class="hi" viewBox="0 0 16 16"><circle cx="8" cy="8" r="6.600" fill="none" stroke="#ef6a7e" stroke-width="2.100"/><path d="M6.500 6.500 L9.500 9.500 M9.500 6.500 L6.500 9.500" stroke="#ea4459" stroke-width="2"/></svg></span><span class="hc" style="left:19.2px"><svg class="hi" viewBox="0 0 16 16"><rect x="0.800" y="0.800" width="14.400" height="14.400" rx="2.600" fill="#d9eefb" stroke="#4eaee8" stroke-width="1.600"/><circle cx="8" cy="7.800" r="3.100" fill="#fff" stroke="#1f8bd8" stroke-width="2.300"/><path d="M9.800 9.800 L11.600 11.900" stroke="#2387d3" stroke-width="1.600"/></svg></span><span class="hn">list_all_people</span><span class="htm">07:50:51.994</span><span class="hms">5 ms</span><span class="hc" style="left:251px"><svg class="hi" viewBox="0 0 16 16"><path d="M5.500 2.800 L10.800 8 L5.500 13.200" fill="none" stroke="#808080" stroke-width="1.250"/></svg></span></div>
<div class="hr sel" style="top:422.30px"><span class="hc" style="left:6.6px"><svg class="hi" viewBox="0 0 16 16"><circle cx="8" cy="8" r="6.600" fill="none" stroke="#ef6a7e" stroke-width="2.100"/><path d="M6.500 6.500 L9.500 9.500 M9.500 6.500 L6.500 9.500" stroke="#ea4459" stroke-width="2"/></svg></span><span class="hc" style="left:19.2px"><svg class="hi" viewBox="0 0 16 16"><rect x="0.800" y="0.800" width="14.400" height="14.400" rx="2.600" fill="#d9eefb" stroke="#4eaee8" stroke-width="1.600"/><circle cx="8" cy="7.800" r="3.100" fill="#fff" stroke="#1f8bd8" stroke-width="2.300"/><path d="M9.800 9.800 L11.600 11.900" stroke="#2387d3" stroke-width="1.600"/></svg></span><span class="hn">list_all_people</span><span class="htm">07:51:12.166</span><span class="hms">5 ms</span><span class="hc" style="left:251px"><svg class="hi" viewBox="0 0 16 16"><path d="M5.500 2.800 L10.800 8 L5.500 13.200" fill="none" stroke="#808080" stroke-width="1.250"/></svg></span></div>
<div class="abs" style="left:467.500px;top:308.600px;width:6.200px;height:127px;background:#eeeeee;border-left:0.500px solid #d8d8d8;box-sizing:border-box"></div>
<div class="abs" style="left:469.300px;top:308.600px;width:2.500px;height:127px;background:#cdcdcd"></div>
<div class="abs" style="left:473.300px;top:308.600px;width:299px;height:15.400px;background:#ececec;font-size:6.200px;line-height:15.800px;color:#666">
  <div class="abs" style="left:0.400px;top:0;width:44.700px;height:15.400px;background:#fff"></div>
  <svg class="abs" style="left:6.600px;top:4.5px" width="7.400" height="7.400" viewBox="0 0 16 16"><circle cx="8" cy="8" r="6.200" fill="none" stroke="#2f8fd6" stroke-width="1.300"/><path d="M8 7 V11.500" stroke="#2f8fd6" stroke-width="1.500"/><circle cx="8" cy="4.800" r="0.900" fill="#2f8fd6"/></svg>
  <span class="abs" style="left:17.300px;top:1.4px;color:#555;white-space:nowrap">General</span>
  <svg class="abs" style="left:51.200px;top:4.700px" width="8.400" height="7" viewBox="0 0 18 15"><path d="M5 11.500 H4.500 A3.500 3.500 0 0 1 4.300 4.600 A5 5 0 0 1 13.800 5.200 A3.200 3.200 0 0 1 13.800 11.500 H13" fill="none" stroke="#777" stroke-width="1.300"/><path d="M9 6.500 V13.500 M6.500 9 L9 6.500 L11.500 9" fill="none" stroke="#777" stroke-width="1.300"/></svg>
  <span class="abs" style="left:62.500px;top:1.4px;color:#777;white-space:nowrap">Request Body</span>
</div>
<div class="dr" style="top:324px;height:15.60px;background:#fff;line-height:20.60px"><b>General HTTP Informations</b></div>
<div class="dr" style="top:339.6px;height:16.90px;background:#ececec;line-height:19.50px">Uri: http://localhost:5000</div>
<div class="dr" style="top:356.5px;height:16.70px;background:#fff;line-height:17.30px">Method: <span class="bp">POST</span></div>
<div class="dr" style="top:373.2px;height:17.60px;background:#ececec;line-height:20.80px">Status: <span class="bs">200</span> OK</div>
<div class="dr" style="top:390.8px;height:16.50px;background:#fff;line-height:18.40px">Cache: no-cache</div>
<div class="dr" style="top:407.3px;height:15.90px;background:#ececec;line-height:18.50px">Referrer Policy: no-referrer</div>
<div class="dr" style="top:423.2px;height:12.40px;background:#fff;line-height:19.20px"><b>Request Headers</b></div>
<div class="abs" style="left:767.300px;top:324px;width:5px;height:111.600px;background:#ececec"></div>
<!-- status bar -->
<div class="abs" style="left:205.5px;top:435.600px;width:566.8px;height:15.100px;background:#ececec;font-size:6.200px;line-height:15.600px;color:#777;border-radius:0 0 2px 0">
  <div class="abs" style="left:46.2px;top:0;width:43.100px;height:15.100px;background:#fff"></div>
  <svg class="abs" style="left:6.3px;top:3.8px" width="7.6" height="7.6" viewBox="0 0 14 14"><rect x="0.800" y="0.800" width="12.400" height="12.400" rx="1.800" fill="none" stroke="#999" stroke-width="1.200"/><path d="M4.300 4.300 L7.200 7 L4.300 9.700" fill="none" stroke="#999" stroke-width="1.200"/></svg>
  <span class="abs" style="left:17.800px;top:1px;white-space:nowrap;color:#808080">Console</span>
  <svg class="abs" style="left:52.200px;top:3.600px" width="8.400" height="7.800" viewBox="0 0 16 15"><path d="M1.300 9.500 L3.600 3 A2 2 0 0 1 5.400 1.700 H10.600 A2 2 0 0 1 12.400 3 L14.700 9.500 V12.300 A1.200 1.200 0 0 1 13.500 13.500 H2.500 A1.200 1.200 0 0 1 1.300 12.300 Z M1.300 9.700 H14.700" fill="none" stroke="#666" stroke-width="1.100" stroke-linejoin="round"/></svg>
  <span class="abs" style="left:63.800px;top:1px;color:#444;white-space:nowrap;letter-spacing:-0.03px">Results</span>
  <svg class="abs" style="left:504.600px;top:3.700px" width="7" height="6.800" viewBox="0 0 14 13.600"><rect x="1" y="1" width="12" height="11.600" rx="1.500" fill="none" stroke="#a8a8a8" stroke-width="1.400"/><path d="M1 6.800 H13" stroke="#a8a8a8" stroke-width="1.400"/></svg>
  <div class="abs" style="left:515.500px;top:0;width:51.300px;height:15.100px;background:#d9d9d9;border-left:0.500px solid #c6c6c6;box-sizing:border-box;border-radius:0 0 2px 0"></div>
  <svg class="abs" style="left:519.400px;top:3.800px" width="8" height="8" viewBox="0 0 16 16"><circle cx="6.500" cy="6.500" r="4.600" fill="none" stroke="#999" stroke-width="1.200"/><path d="M10 10 L14.500 14.500 M4.300 6.500 H8.700" stroke="#999" stroke-width="1.200"/></svg>
  <span class="abs" style="left:534.500px;top:1.900px;color:#222;font-size:5.800px;font-weight:bold;white-space:nowrap">100%</span>
  <svg class="abs" style="left:555.500px;top:3.800px" width="8" height="8" viewBox="0 0 16 16"><circle cx="6.500" cy="6.500" r="4.600" fill="none" stroke="#999" stroke-width="1.200"/><path d="M10 10 L14.500 14.500 M4.300 6.500 H8.700 M6.500 4.300 V8.700" stroke="#999" stroke-width="1.200"/></svg>
</div>
</div></body></html>
